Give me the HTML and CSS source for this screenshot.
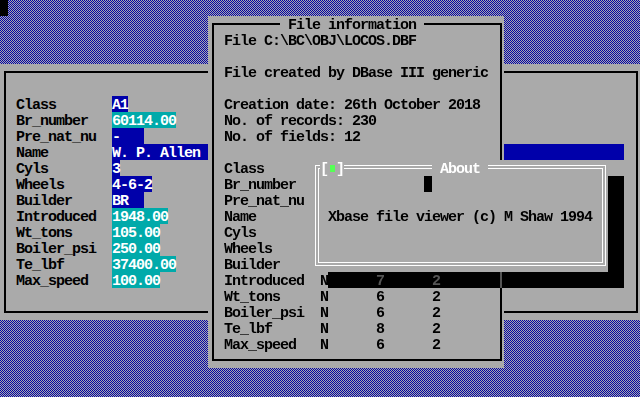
FILE: index.html
```html
<!DOCTYPE html>
<html lang="en">
<head>
    <meta charset="UTF-8">
    <meta name="viewport" content="width=device-width, initial-scale=1.0">
    <link rel="stylesheet" href="styles.css">
    <title>Xbase file viewer</title>
</head>
<body>
    <div class="screen">
        <div class="cursor"></div>

        <div class="win win-record">
            <div class="frame"></div>
            <div class="rows record-rows">
                <div class="row"><span class="lbl">Class</span><span class="val blue">A1</span></div>
                <div class="row"><span class="lbl">Br_number</span><span class="val cyan">60114.00</span></div>
                <div class="row"><span class="lbl">Pre_nat_nu</span><span class="val blue">-   </span></div>
                <div class="row"><span class="lbl">Name</span><span class="val blue val-long">W. P. Allen</span></div>
                <div class="row"><span class="lbl">Cyls</span><span class="val blue">3</span></div>
                <div class="row"><span class="lbl">Wheels</span><span class="val blue">4-6-2</span></div>
                <div class="row"><span class="lbl">Builder</span><span class="val blue">BR  </span></div>
                <div class="row"><span class="lbl">Introduced</span><span class="val cyan">1948.00</span></div>
                <div class="row"><span class="lbl">Wt_tons</span><span class="val cyan">105.00</span></div>
                <div class="row"><span class="lbl">Boiler_psi</span><span class="val cyan">250.00</span></div>
                <div class="row"><span class="lbl">Te_lbf</span><span class="val cyan">37400.00</span></div>
                <div class="row"><span class="lbl">Max_speed</span><span class="val cyan">100.00</span></div>
            </div>
        </div>

        <div class="win win-info">
            <div class="frame"></div>
            <div class="title-row"><span class="title"> File information </span></div>
            <div class="rows info-rows">
                <div class="row">File C:\BC\OBJ\LOCOS.DBF</div>
                <div class="row"></div>
                <div class="row">File created by DBase III generic</div>
                <div class="row"></div>
                <div class="row">Creation date: 26th October 2018</div>
                <div class="row">No. of records: 230</div>
                <div class="row">No. of fields: 12</div>
                <div class="row"></div>
                <div class="row"><span class="col-name">Class</span></div>
                <div class="row"><span class="col-name">Br_number</span></div>
                <div class="row"><span class="col-name">Pre_nat_nu</span></div>
                <div class="row"><span class="col-name">Name</span></div>
                <div class="row"><span class="col-name">Cyls</span></div>
                <div class="row"><span class="col-name">Wheels</span></div>
                <div class="row"><span class="col-name">Builder</span></div>
                <div class="row"><span class="col-name">Introduced</span><span class="col-type">N</span></div>
                <div class="row"><span class="col-name">Wt_tons</span><span class="col-type">N</span><span class="col-size">6</span><span>2</span></div>
                <div class="row"><span class="col-name">Boiler_psi</span><span class="col-type">N</span><span class="col-size">6</span><span>2</span></div>
                <div class="row"><span class="col-name">Te_lbf</span><span class="col-type">N</span><span class="col-size">8</span><span>2</span></div>
                <div class="row"><span class="col-name">Max_speed</span><span class="col-type">N</span><span class="col-size">6</span><span>2</span></div>
            </div>
        </div>

        <div class="win win-about">
            <div class="frame frame-double"></div>
            <div class="rows">
                <div class="row about-top">
                    <span class="close">[<span class="close-dot"></span>]</span>
                    <span class="about-title"> About </span>
                </div>
                <div class="row"><span class="text-cursor"></span></div>
                <div class="row"></div>
                <div class="row about-text">Xbase file viewer (c) M Shaw 1994</div>
            </div>
        </div>

        <!-- shadow of the About box, the covered row shows through in dark grey -->
        <div class="shadow shadow-right"></div>
        <div class="shadow shadow-bottom">      7      2       <span class="shade-line"></span></div>
    </div>
</body>
</html>
```

FILE: styles.css
```css
body {
    margin: 0;
    width: 640px;
    height: 397px;
    overflow: hidden;
    background: linear-gradient(90deg, #0000aa 1px, #aaaaaa 1px) 0 0 / 2px 2px;
    font: bold 15px/16px "Liberation Mono", monospace;
    letter-spacing: -1px;
    color: #000;
}

/* second half of the dither: every other pixel row swapped */
body::before {
    content: "";
    position: fixed;
    inset: 0;
    background: linear-gradient(90deg, #aaaaaa 1px, #0000aa 1px) 0 0 / 2px 2px;
    -webkit-mask: linear-gradient(180deg, transparent 1px, #000 1px) 0 0 / 2px 2px;
    mask: linear-gradient(180deg, transparent 1px, #000 1px) 0 0 / 2px 2px;
}

.screen {
    position: relative;
    width: 640px;
    height: 400px;
}

.cursor {
    position: absolute;
    left: 0;
    top: 0;
    width: 8px;
    height: 16px;
    background-color: #000;
}

.win {
    position: absolute;
    background-color: #aaa;
}

.win-record {
    left: 0;
    top: 64px;
    width: 640px;
    height: 256px;
}

.win-info {
    left: 208px;
    top: 16px;
    width: 296px;
    height: 352px;
}

.win-about {
    left: 312px;
    top: 160px;
    width: 296px;
    height: 112px;
}

.frame {
    position: absolute;
    inset: 7px 2px 7px 4px;
    border: 2px solid #000;
}

.frame-double {
    inset: 5px 2px 6px 3px;
    border: 1px solid #fff;
    box-shadow: inset 0 0 0 2px #aaa, inset 0 0 0 3px #fff;
}

.rows {
    position: relative;
}

.row {
    display: flex;
    height: 16px;
    padding-top: 2px;
    box-sizing: border-box;
    white-space: pre;
}

.record-rows {
    padding: 32px 0 0 16px;
}

.lbl {
    width: 96px;
}

.val {
    margin-top: -2px;
    padding-top: 2px;
    color: #fff;
}

.val.blue {
    background-color: #0000aa;
}

.val.cyan {
    background-color: #00aaaa;
}

.val-long {
    width: 512px;
}

.title-row {
    position: relative;
    height: 16px;
    padding: 2px 0 0 72px;
    box-sizing: border-box;
    white-space: pre;
}

.title {
    background-color: #aaa;
}

.info-rows {
    padding-left: 16px;
}

.col-name {
    width: 96px;
}

.col-type,
.col-size {
    width: 56px;
}

.about-top {
    color: #fff;
}

.close {
    margin-left: 8px;
    background-color: #aaa;
}

.close-dot {
    display: inline-block;
    width: 8px;
    height: 14px;
    vertical-align: top;
    background: linear-gradient(#55ff55, #55ff55) 2px 3px / 5px 7px no-repeat;
}

.about-title {
    margin-left: 88px;
    background-color: #aaa;
}

.text-cursor {
    width: 8px;
    height: 16px;
    margin: -2px 0 0 112px;
    background-color: #000;
}

.about-text {
    padding-left: 16px;
}

.shadow {
    position: absolute;
    background-color: #000;
    color: #555;
    white-space: pre;
}

.shadow-right {
    left: 608px;
    top: 176px;
    width: 16px;
    height: 96px;
}

.shadow-bottom {
    left: 328px;
    top: 272px;
    width: 296px;
    height: 16px;
    padding-top: 2px;
    box-sizing: border-box;
}

.shade-line {
    display: inline-block;
    width: 2px;
    height: 16px;
    margin: -2px 2px 0 4px;
    vertical-align: top;
    background-color: #555;
}
```
